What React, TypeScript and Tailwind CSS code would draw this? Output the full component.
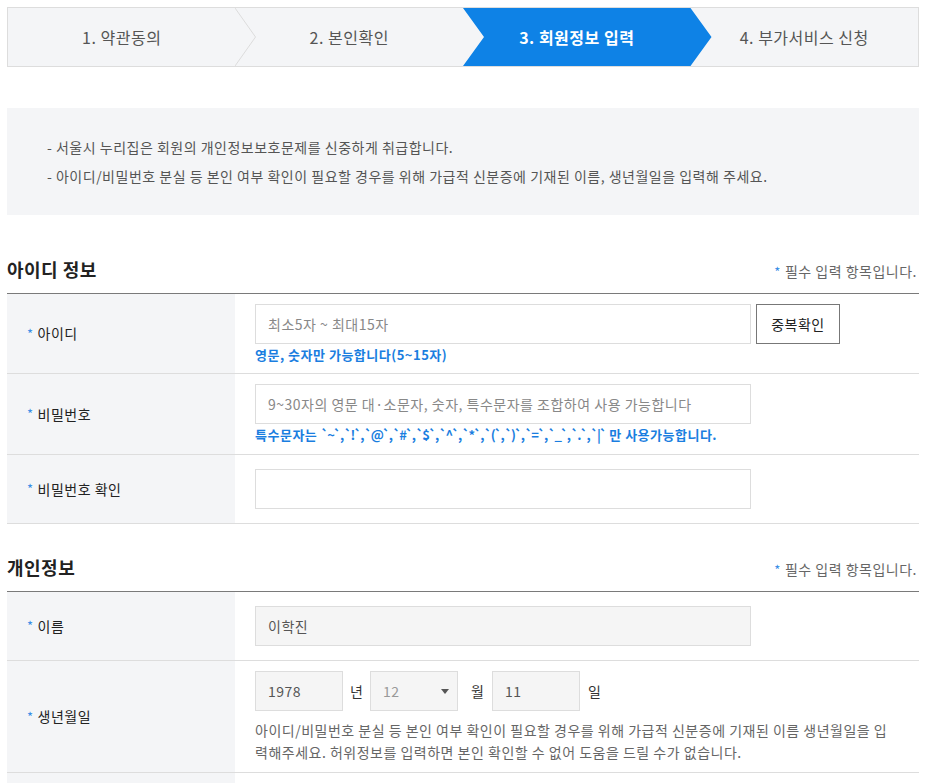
import { ReactNode } from "react";

// Step indicator at the top of the join form
const steps = ["1. 약관동의", "2. 본인확인", "3. 회원정보 입력", "4. 부가서비스 신청"];

const StepBar = () => {
  return (
    <div className="flex h-[60px] border border-[#dddddd] bg-[#f4f5f7]">
      {steps.map((step, i) => {
        const active = i === 2;
        return (
          <div key={step} className="relative flex flex-1 items-center justify-center">
            {active && (
              <div className="absolute inset-y-0 left-0 -right-[21px] z-10 bg-[#0e82e6] [clip-path:polygon(0_0,calc(100%-21px)_0,100%_50%,calc(100%-21px)_100%,0_100%,21px_50%)]" />
            )}
            {i === 0 && (
              <svg
                className="absolute top-0 -right-[21px] z-10 h-full w-[22px]"
                viewBox="0 0 22 58"
                preserveAspectRatio="none"
              >
                <polyline points="0,0 20.5,29 0,58" fill="none" stroke="#dcdcdc" strokeWidth="1" />
              </svg>
            )}
            <span
              className={
                active
                  ? "relative z-20 text-[16px] font-bold text-white"
                  : "relative z-20 text-[16px] text-[#555555]"
              }
            >
              {step}
            </span>
          </div>
        );
      })}
    </div>
  );
};

const Star = () => <span className="mr-[4px] text-[13px] text-[#3a8ee6]">*</span>;

const SectionHead = ({ title }: { title: string }) => (
  <div className="flex items-end justify-between border-b border-[#7a7a7a] pb-[11px]">
    <h2 className="text-[18px] leading-[26px] font-bold text-[#222222]">{title}</h2>
    <p className="pr-[2px] text-[14px] leading-[20px] text-[#666666]">
      <Star />
      필수 입력 항목입니다.
    </p>
  </div>
);

interface RowProps {
  label: string;
  pad?: string;
  children: ReactNode;
}

const Row = ({ label, pad = "py-[14px]", children }: RowProps) => (
  <div className="flex border-b border-[#dddddd]">
    <div className="flex w-[228px] shrink-0 items-center bg-[#f4f5f7] pl-[20px] text-[14px] text-[#222222]">
      <Star />
      {label}
    </div>
    <div className={`flex-1 pl-[20px] pr-[20px] ${pad}`}>{children}</div>
  </div>
);

const inputBase =
  "h-[40px] w-[496px] border border-[#dddddd] px-[12px] text-[14px] tracking-[0.5px] outline-none placeholder:text-[#888888]";

export default function App() {
  return (
    <div className="min-h-screen bg-white font-['Noto_Sans_CJK_KR',sans-serif] tracking-[0.5px]">
      <div className="ml-[7px] w-[912px] pt-[7px]">
        <StepBar />

        {/* notice box */}
        <div className="mt-[41px] bg-[#f4f5f7] pt-[25px] pb-[24px] pl-[40px] text-[14px] leading-[29px] text-[#555555]">
          <p>- 서울시 누리집은 회원의 개인정보보호문제를 신중하게 취급합니다.</p>
          <p>- 아이디/비밀번호 분실 등 본인 여부 확인이 필요할 경우를 위해 가급적 신분증에 기재된 이름, 생년월일을 입력해 주세요.</p>
        </div>

        {/* ID info */}
        <div className="mt-[41px]">
          <SectionHead title="아이디 정보" />
          <Row label="아이디" pad="pt-[10px] pb-[9px]">
            <div className="flex gap-[5px]">
              <input className={`${inputBase} bg-white text-[#333333]`} placeholder="최소5자 ~ 최대15자" />
              <button className="h-[40px] w-[84px] border border-[#777777] bg-white text-[14px] text-[#222222]">
                중복확인
              </button>
            </div>
            <p className="mt-[2px] text-[13px] leading-[18px] font-bold text-[#1a7ee0]">
              영문, 숫자만 가능합니다(5~15자)
            </p>
          </Row>
          <Row label="비밀번호" pad="pt-[10px] pb-[10px]">
            <input
              type="text"
              className={`${inputBase} bg-white text-[#333333]`}
              placeholder="9~30자의 영문 대·소문자, 숫자, 특수문자를 조합하여 사용 가능합니다"
            />
            <p className="mt-[2px] whitespace-nowrap text-[13px] leading-[18px] font-bold text-[#1a7ee0]">
              특수문자는{" "}
              <span className="tracking-[-1.6px]">
                `~`, `!`, `@`, `#`, `$`, `^`, `*`, `(`, `)`, `=`, `_`, `.`, `|`
              </span>{" "}
              만 사용가능합니다.
            </p>
          </Row>
          <Row label="비밀번호 확인">
            <input type="text" className={`${inputBase} bg-white text-[#333333]`} />
          </Row>
        </div>

        {/* personal info */}
        <div className="mt-[30px]">
          <SectionHead title="개인정보" />
          <Row label="이름">
            <input className={`${inputBase} bg-[#f5f5f5] text-[#555555]`} defaultValue="이학진" readOnly />
          </Row>
          <Row label="생년월일" pad="pt-[10px] pb-[9px]">
            <div className="flex items-center text-[14px] text-[#333333]">
              <input
                className="h-[40px] w-[88px] border border-[#dddddd] bg-[#f5f5f5] px-[12px] text-[14px] text-[#555555] outline-none"
                defaultValue="1978"
                readOnly
              />
              <span className="mx-[7px] w-[13px]">년</span>
              <div className="relative flex h-[40px] w-[88px] items-center border border-[#dddddd] bg-[#f5f5f5] px-[12px] text-[#999999]">
                12
                <svg className="absolute right-[8px] top-[17px] h-[5px] w-[8px]" viewBox="0 0 8 5">
                  <polygon points="0,0 8,0 4,5" fill="#555555" />
                </svg>
              </div>
              <span className="ml-[13px] mr-[9px] w-[12px]">월</span>
              <input
                className="h-[40px] w-[88px] border border-[#dddddd] bg-[#f5f5f5] px-[12px] text-[14px] text-[#555555] outline-none"
                defaultValue="11"
                readOnly
              />
              <span className="ml-[8px]">일</span>
            </div>
            <p className="mt-[8px] text-[14px] leading-[22px] text-[#666666]">
              <span className="block whitespace-nowrap">
                아이디/비밀번호 분실 등 본인 여부 확인이 필요할 경우를 위해 가급적 신분증에 기재된 이름 생년월일을 입
              </span>
              <span className="block whitespace-nowrap">
                력해주세요. 허위정보를 입력하면 본인 확인할 수 없어 도움을 드릴 수가 없습니다.
              </span>
            </p>
          </Row>
          {/* top of the next row, cut by the viewport */}
          <div className="flex h-[40px]">
            <div className="w-[228px] shrink-0 bg-[#f4f5f7]" />
            <div className="flex-1" />
          </div>
        </div>
      </div>
    </div>
  );
}
